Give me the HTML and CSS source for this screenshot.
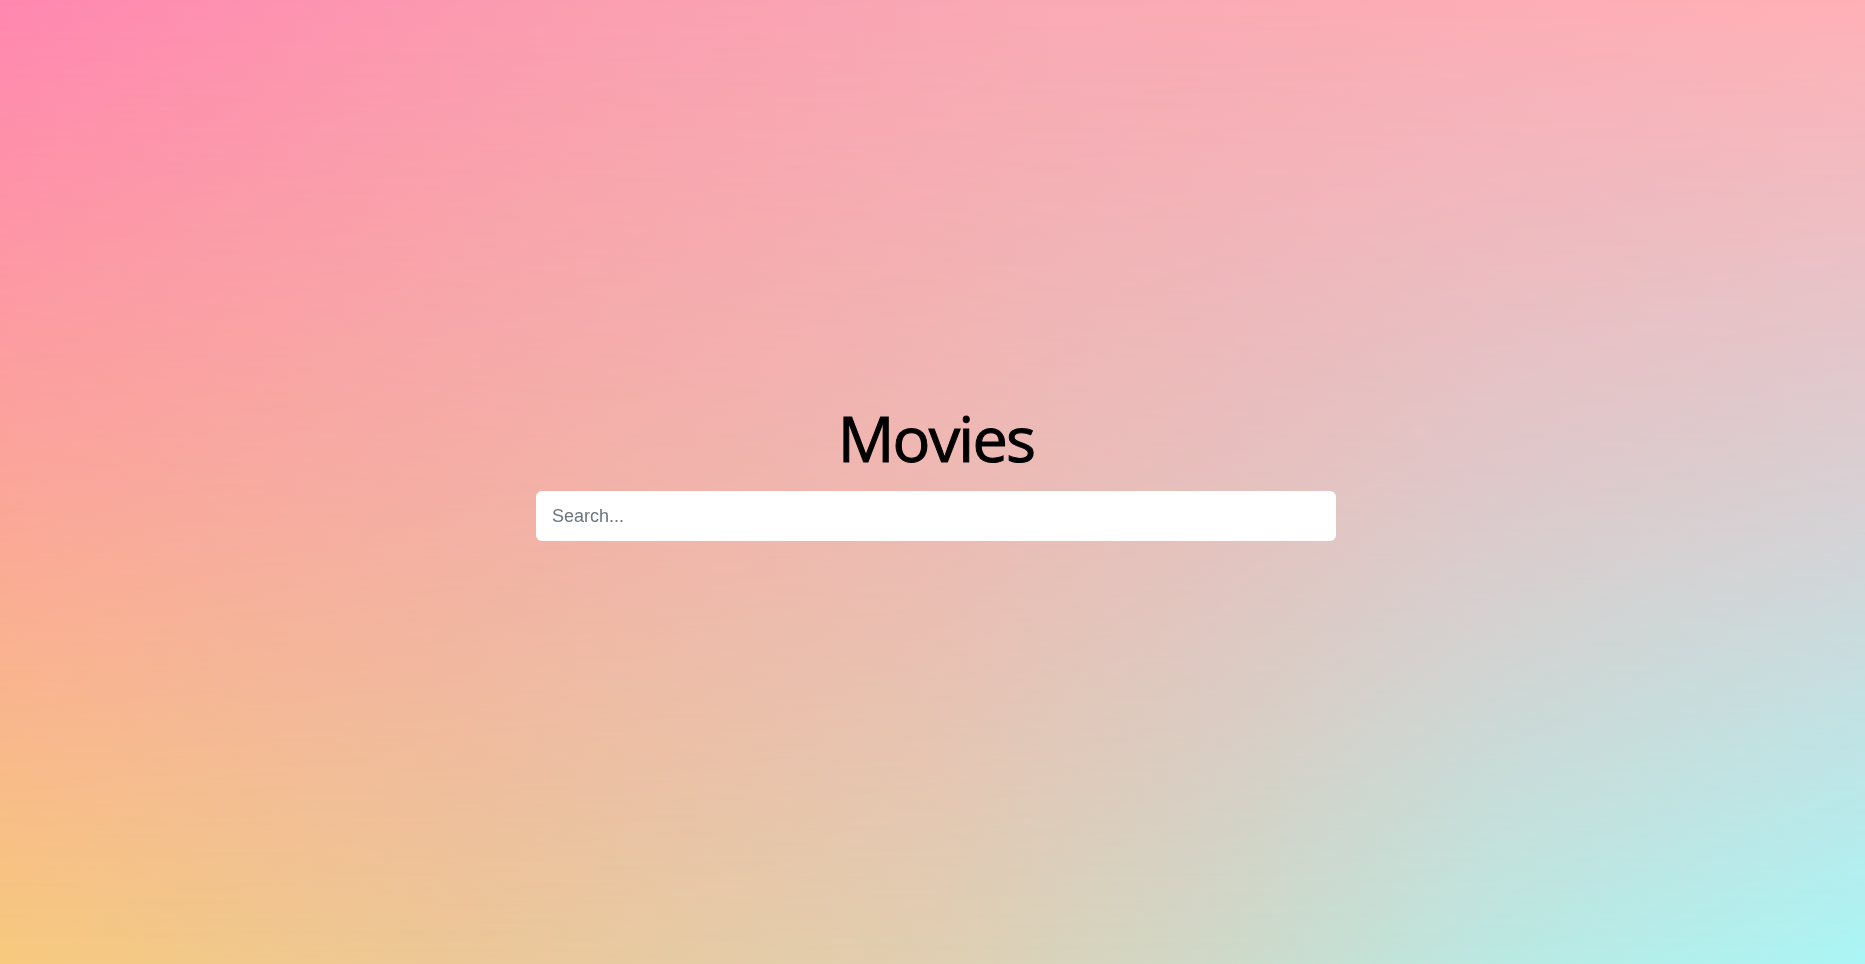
FILE: index.html
```html
<!DOCTYPE html>
<html lang="en">
<head>
<meta charset="utf-8">
<title>Movies</title>
<link rel="stylesheet" href="styles.css">
</head>
<body>
<div class="bg-top"></div>
<main class="page">
  <section class="hero">
    <h1 class="title">Movies</h1>
    <input class="search" type="text" placeholder="Search...">
  </section>
</main>
</body>
</html>
```
FILE: styles.css
```css
html, body {
  margin: 0;
  padding: 0;
  height: 100%;
}
html {
  background: linear-gradient(to right, #f7ca7e 0%, #ecc898 25%, #e0cfb2 50%, #cfd9c8 65%, #bbe9e2 80%, #aaf6f6 100%);
}
body {
  position: relative;
  font-family: "Open Sans", "Liberation Sans", sans-serif;
  overflow: hidden;
}
.bg-top {
  position: fixed;
  inset: 0;
  z-index: 0;
  background: linear-gradient(to right, #ff87b0 0%, #fb9db0 30%, #f9a9b4 55%, #ffb0b6 100%);
  -webkit-mask-image: linear-gradient(to bottom, #000 0%, rgba(0,0,0,0.55) 50%, transparent 100%);
  mask-image: linear-gradient(to bottom, #000 0%, rgba(0,0,0,0.55) 50%, transparent 100%);
}
.page {
  position: relative;
  z-index: 1;
  height: 100%;
  display: flex;
  align-items: center;
  justify-content: center;
  padding-left: 7px;
  padding-bottom: 29px;
  box-sizing: border-box;
}
.hero {
  display: flex;
  flex-direction: column;
  align-items: center;
  width: 800px;
}
.title {
  margin: 0 0 10px 0;
  font-family: "Open Sans", sans-serif;
  font-weight: 400;
  font-size: 63px;
  letter-spacing: -1.8px;
  line-height: 87px;
  color: #000;
  -webkit-text-stroke: 1px #000;
}
.search {
  width: 800px;
  height: 50px;
  box-sizing: border-box;
  border: none;
  border-radius: 6px;
  background: #fff;
  padding: 0 16px;
  font-family: "Liberation Sans", Arial, sans-serif;
  font-size: 18px;
  color: #212529;
  outline: none;
}
.search::placeholder {
  color: #6c757d;
}
```
